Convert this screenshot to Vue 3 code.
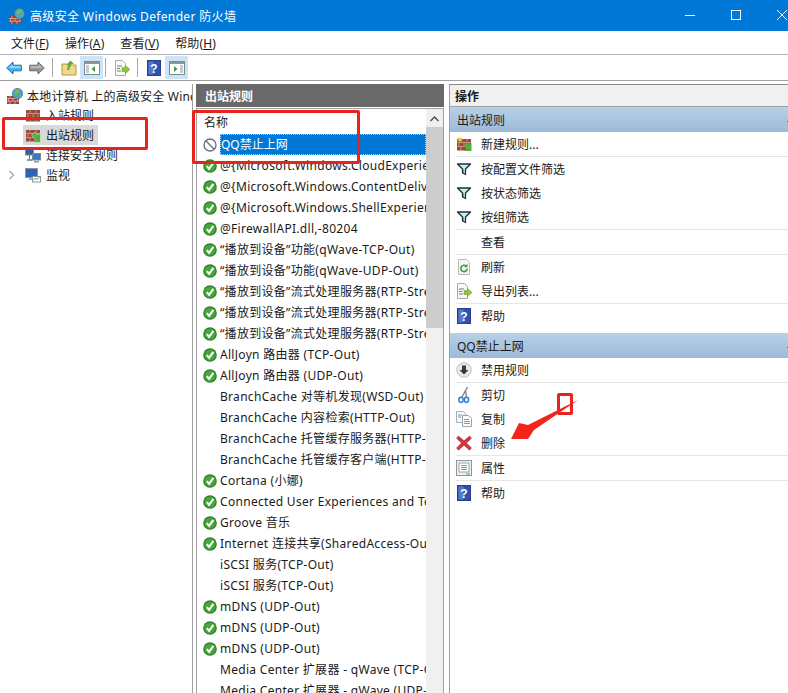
<script setup>
const menus = [
  { label: '文件', key: 'F' },
  { label: '操作', key: 'A' },
  { label: '查看', key: 'V' },
  { label: '帮助', key: 'H' },
]

const treeItems = [
  { label: '入站规则', icon: 'fw-in' },
  { label: '出站规则', icon: 'fw-out', active: true },
  { label: '连接安全规则', icon: 'link' },
  { label: '监视', icon: 'monitor', arrow: true },
]

const rules = [
  { name: 'QQ禁止上网', icon: 'block', selected: true },
  { name: '@{Microsoft.Windows.CloudExperienceHost', icon: 'check' },
  { name: '@{Microsoft.Windows.ContentDeliveryManager', icon: 'check' },
  { name: '@{Microsoft.Windows.ShellExperienceHost', icon: 'check' },
  { name: '@FirewallAPI.dll,-80204', icon: 'check' },
  { name: '“播放到设备”功能(qWave-TCP-Out)', icon: 'check' },
  { name: '“播放到设备”功能(qWave-UDP-Out)', icon: 'check' },
  { name: '“播放到设备”流式处理服务器(RTP-Streaming', icon: 'check' },
  { name: '“播放到设备”流式处理服务器(RTP-Streaming', icon: 'check' },
  { name: '“播放到设备”流式处理服务器(RTP-Streaming', icon: 'check' },
  { name: 'AllJoyn 路由器 (TCP-Out)', icon: 'check' },
  { name: 'AllJoyn 路由器 (UDP-Out)', icon: 'check' },
  { name: 'BranchCache 对等机发现(WSD-Out)' },
  { name: 'BranchCache 内容检索(HTTP-Out)' },
  { name: 'BranchCache 托管缓存服务器(HTTP-Out)' },
  { name: 'BranchCache 托管缓存客户端(HTTP-Out)' },
  { name: 'Cortana (小娜)', icon: 'check' },
  { name: 'Connected User Experiences and Telemetry', icon: 'check' },
  { name: 'Groove 音乐', icon: 'check' },
  { name: 'Internet 连接共享(SharedAccess-Out)', icon: 'check' },
  { name: 'iSCSI 服务(TCP-Out)' },
  { name: 'iSCSI 服务(TCP-Out)' },
  { name: 'mDNS (UDP-Out)', icon: 'check' },
  { name: 'mDNS (UDP-Out)', icon: 'check' },
  { name: 'mDNS (UDP-Out)', icon: 'check' },
  { name: 'Media Center 扩展器 - qWave (TCP-Out)' },
  { name: 'Media Center 扩展器 - qWave (UDP-Out)' },
]

const actionGroups = [
  {
    title: '出站规则',
    items: [
      { label: '新建规则...', icon: 'fw-new', line: true },
      { label: '按配置文件筛选', icon: 'funnel' },
      { label: '按状态筛选', icon: 'funnel' },
      { label: '按组筛选', icon: 'funnel', line: true },
      { label: '查看', line: true },
      { label: '刷新', icon: 'refresh' },
      { label: '导出列表...', icon: 'export', line: true },
      { label: '帮助', icon: 'help' },
    ],
  },
  {
    title: 'QQ禁止上网',
    items: [
      { label: '禁用规则', icon: 'disable', line: true },
      { label: '剪切', icon: 'cut' },
      { label: '复制', icon: 'copy' },
      { label: '删除', icon: 'delete', line: true },
      { label: '属性', icon: 'props', line: true },
      { label: '帮助', icon: 'help' },
    ],
  },
]
</script>

<template>
  <div class="window">
    <svg class="defs" width="0" height="0">
      <defs>
        <g id="bricks">
          <rect x="1" y="3" width="14" height="11.500" fill="#9c463c" />
          <path d="M1 6.500h14M1 10.500h14M5 3v3.500M11 3v3.500M3 6.500v4M8 6.500v4M13 6.500v4M5 10.500v4M11 10.500v4" stroke="#c9a48c" stroke-width=".8" fill="none" />
        </g>
        <symbol id="fw" viewBox="0 0 16 16">
          <path d="M0 8h12v8H0z" fill="#a03f38" />
          <path d="M0 10.500h12M0 13.200h12M3 8v2.500M8 8v2.500M1.500 10.500v2.700M6 10.500v2.700M10.500 10.500v2.700M3 13.200V16M8 13.200V16" stroke="#d9b9a0" stroke-width=".8" fill="none" />
          <circle cx="10.500" cy="5.500" r="5.200" fill="#4f9fc8" stroke="#2b6a8c" stroke-width=".6" />
          <path d="M7.500 3.500l3-2.200 2.500 1-1.200 2.700-2 .4-.3 2-1.500-1.500z" fill="#79b958" />
          <path d="M12 7.500l1.800-.8.300 1.600-1.300 1z" fill="#79b958" />
        </symbol>
        <symbol id="fw-in" viewBox="0 0 16 16">
          <use href="#bricks" />
          <path d="M15 10H10V7.500L6 11l4 3.500V12h5z" fill="#55a93c" />
        </symbol>
        <symbol id="fw-out" viewBox="0 0 16 16">
          <use href="#bricks" />
          <path d="M6.500 8l3-3 3 3L15.500 6v9.500H8l2.500-2.500z" fill="#4fb03c" stroke="#e8f5e0" stroke-width=".5" />
        </symbol>
        <symbol id="fw-new" viewBox="0 0 16 16">
          <use href="#bricks" />
          <path d="M8 9l2.500-2.500 2.500 2.500L15.500 7v8H8.500l2-2z" fill="#4fb03c" />
          <path d="M3.500 0l.8 2 2-.6-1 1.800L6.800 4.500l-2 .2L4 6.500 3 4.700l-2-.2 1.500-1.300-1-1.800 2 .6z" fill="#f2c83c" />
        </symbol>
        <symbol id="link" viewBox="0 0 16 16">
          <rect x=".5" y="1.500" width="8" height="6.500" fill="#2d5ea8" stroke="#7c8798" />
          <rect x="7.500" y="6.500" width="8" height="6.500" fill="#3d78c4" stroke="#7c8798" />
          <path d="M2 12h5v2H2zM9 14h5v1.500H9z" fill="#8d98a6" />
          <path d="M4.500 8v4" stroke="#5d8c3c" />
        </symbol>
        <symbol id="monitor" viewBox="0 0 16 16">
          <rect x=".5" y="1.500" width="12" height="9" fill="#2f62b4" stroke="#8a96a6" />
          <path d="M4 10.500h5V13H4z" fill="#a5aebb" />
          <rect x="7.500" y="9.500" width="8" height="5.500" fill="#fff" stroke="#8a96a6" />
          <path d="M8.500 13l2-2 1.500 1.500 2.500-2.500" stroke="#4aa33a" fill="none" />
        </symbol>
        <symbol id="check" viewBox="0 0 14 14">
          <circle cx="7" cy="7" r="6.800" fill="#2f7d2a" />
          <circle cx="7" cy="7" r="5.600" fill="#46a63a" />
          <path d="M3.800 7.200l2.300 2.700 4.300-6" stroke="#fff" stroke-width="2" fill="none" />
        </symbol>
        <symbol id="block" viewBox="0 0 14 14">
          <circle cx="7" cy="7" r="6" fill="#fff" stroke="#6f6a86" stroke-width="1.300" />
          <path d="M2.800 2.800l8.400 8.400" stroke="#6f6a86" stroke-width="1.300" />
        </symbol>
        <symbol id="funnel" viewBox="0 0 16 16">
          <path d="M1.500 3h13l-5 5v5.500l-3-1.500V8z" fill="#cfe8e8" stroke="#17383c" stroke-width="1.300" stroke-linejoin="round" />
          <path d="M7.500 8.500v3.500" stroke="#5f9da0" />
        </symbol>
        <symbol id="refresh" viewBox="0 0 16 16">
          <path d="M2.500.5h8l3 3v12h-11z" fill="#f5f7f3" stroke="#b4bcb0" />
          <path d="M11.200 9.500a3.200 3.200 0 1 1-1-2.400" stroke="#3f9c45" stroke-width="1.600" fill="none" />
          <path d="M11.500 4.800v3.400H8.200z" fill="#3f9c45" />
        </symbol>
        <symbol id="export" viewBox="0 0 16 16">
          <path d="M1.500.5h7l3 3v12h-10z" fill="#fafaf5" stroke="#a8aca0" />
          <path d="M3 6h5M3 8.500h3M3 11h4" stroke="#6f7a70" />
          <path d="M8 7.500h3.500V5.500L16 9.500l-4.500 4v-2H8z" fill="#8bc838" stroke="#5c9a2a" stroke-width=".5" />
        </symbol>
        <symbol id="help" viewBox="0 0 14 16">
          <rect x=".5" y=".5" width="13" height="15" fill="#2f52b0" stroke="#24408c" />
          <rect x="1.500" y="1.500" width="5" height="13" fill="#5578cc" />
          <text x="7" y="12.500" font-size="12" font-weight="700" fill="#fff" text-anchor="middle" font-family="Liberation Sans, sans-serif">?</text>
        </symbol>
        <symbol id="disable" viewBox="0 0 16 16">
          <circle cx="8" cy="8" r="7.300" fill="#e8e8e8" stroke="#c2c2c2" />
          <path d="M6 3.500h4V8h2.500L8 12.500 3.500 8H6z" fill="#3a3a3a" />
        </symbol>
        <symbol id="cut" viewBox="0 0 16 16">
          <path d="M11.500 0L6 10M9.500 3L10.500 10" stroke="#74818f" stroke-width="1.300" fill="none" />
          <ellipse cx="5" cy="12.800" rx="2.200" ry="2.600" fill="none" stroke="#2a7fd0" stroke-width="1.500" />
          <ellipse cx="10.500" cy="12.800" rx="2.200" ry="2.600" fill="none" stroke="#2a7fd0" stroke-width="1.500" />
        </symbol>
        <symbol id="copy" viewBox="0 0 16 16">
          <path d="M.5.500h7l2 2v9h-9z" fill="#f6f8fa" stroke="#a8b0b8" />
          <path d="M6.500 4.500h6l3 3v8h-9z" fill="#fff" stroke="#98a2ac" />
          <path d="M8 8.500h5M8 10.500h6M8 12.500h6M2 4h4M2 6h3" stroke="#8a96a2" />
        </symbol>
        <symbol id="delete" viewBox="0 0 16 16">
          <path d="M2.500 1L8 5.800 13.500 1 15.500 3.200 10.500 8l5 5-2 2.200L8 10.200 2.500 15.200.5 13l5-5-5-4.800z" fill="#d2363c" stroke="#a82a30" stroke-width=".5" />
        </symbol>
        <symbol id="props" viewBox="0 0 16 16">
          <rect x=".5" y=".5" width="15" height="15" fill="#eef0f0" stroke="#8e9696" />
          <rect x="3" y="3" width="10" height="9" fill="#fff" stroke="#9aa4a4" />
          <path d="M5 5.500h6M5 7.500h6M5 9.500h6" stroke="#8a9494" />
          <path d="M10 14h4" stroke="#3fa7a7" />
        </symbol>
        <symbol id="back" viewBox="0 0 16 14">
          <path d="M.7 7L7 1v3.200h8.300v5.600H7V13z" fill="#4fb0ec" stroke="#1f6fb0" />
          <path d="M2.500 7L6.500 3.500v1.700h8V7z" fill="#9ad6f8" />
        </symbol>
        <symbol id="forward" viewBox="0 0 16 14">
          <path d="M15.300 7L9 1v3.200H.7v5.600H9V13z" fill="#979797" stroke="#6a6a6a" />
          <path d="M1.500 5.200h8V3.500L13.500 7h-12z" fill="#bdbdbd" />
        </symbol>
        <symbol id="folder-up" viewBox="0 0 16 16">
          <path d="M1 4h5l1 1h8v10H1z" fill="#efd98c" stroke="#ae9645" />
          <path d="M6 10l1-5H5L9.500 .5 13 4h-2.500L8 10z" fill="#6aa83c" />
        </symbol>
        <symbol id="pane-left" viewBox="0 0 16 16">
          <rect x=".5" y="1.500" width="15" height="13" fill="#fff" stroke="#7d8a90" />
          <path d="M1 2h14v2H1z" fill="#8a9a94" />
          <path d="M2 6h3M2 8h3M2 10h3M2 12h3" stroke="#8a969c" />
          <path d="M11 6v6L7.500 9z" fill="#3f9c45" />
        </symbol>
        <symbol id="pane-right" viewBox="0 0 16 16">
          <rect x=".5" y="1.500" width="15" height="13" fill="#fff" stroke="#7d8a90" />
          <path d="M1 2h14v2H1z" fill="#8a9a94" />
          <path d="M11 6h3M11 8h3M11 10h3M11 12h3" stroke="#8a969c" />
          <path d="M5 6v6L8.500 9z" fill="#3f9c45" />
        </symbol>
      </defs>
    </svg>

    <header class="titlebar">
      <svg class="title-icon"><use href="#fw" /></svg>
      <span class="title-text">高级安全 Windows Defender 防火墙</span>
      <div class="win-btns">
        <svg width="46" height="31" viewBox="0 0 46 31"><path d="M18 15.500h10" stroke="#fff" /></svg>
        <svg width="46" height="31" viewBox="0 0 46 31"><rect x="18.500" y="10.500" width="9" height="9" fill="none" stroke="#fff" /></svg>
        <svg width="46" height="31" viewBox="0 0 46 31"><path d="M18 10l10 10M28 10L18 20" stroke="#fff" /></svg>
      </div>
    </header>

    <nav class="menubar">
      <span v-for="m in menus" :key="m.key" class="menu-item">{{ m.label }}(<u>{{ m.key }}</u>)</span>
    </nav>

    <div class="toolbar">
      <svg class="tool mr7"><use href="#back" /></svg>
      <svg class="tool mr7"><use href="#forward" /></svg>
      <i class="tool-sep"></i>
      <svg class="tool mr3"><use href="#folder-up" /></svg>
      <span class="tool-on mr2"><svg class="tool"><use href="#pane-left" /></svg></span>
      <i class="tool-sep"></i>
      <svg class="tool mr7"><use href="#export" /></svg>
      <i class="tool-sep"></i>
      <svg class="tool mr3"><use href="#help" /></svg>
      <span class="tool-on"><svg class="tool"><use href="#pane-right" /></svg></span>
    </div>

    <main class="panes">
      <section class="tree">
        <div class="tree-root">
          <svg class="ico"><use href="#fw" /></svg>
          <span class="tree-root-label">本地计算机 上的高级安全 Windows Defender 防火墙</span>
        </div>
        <div v-for="t in treeItems" :key="t.label" class="tree-row">
          <span class="tree-arrow">
            <svg v-if="t.arrow" width="8" height="10" viewBox="0 0 8 10"><path d="M1.500 1l4 4-4 4" fill="none" stroke="#a6a6a6" stroke-width="1.300" /></svg>
          </span>
          <span class="tree-item" :class="{ active: t.active }">
            <svg class="ico"><use :href="'#' + t.icon" /></svg>
            <span class="tree-label">{{ t.label }}</span>
          </span>
        </div>
      </section>

      <section class="center">
        <div class="center-head">出站规则</div>
        <div class="list-box">
          <div class="list">
            <div class="list-head">名称</div>
            <div v-for="(r, i) in rules" :key="i" class="rule">
              <span class="rule-ico"><svg v-if="r.icon" class="ico-sm"><use :href="'#' + r.icon" /></svg></span>
              <span class="rule-name" :class="{ selected: r.selected }">{{ r.name }}</span>
            </div>
          </div>
          <div class="scrollbar">
            <svg class="scroll-up" width="17" height="19" viewBox="0 0 17 19"><path d="M4.500 12l4-4 4 4" fill="none" stroke="#505050" stroke-width="1.500" /></svg>
            <div class="scroll-thumb"></div>
          </div>
        </div>
      </section>

      <section class="actions">
        <div class="actions-head">操作</div>
        <div v-for="g in actionGroups" :key="g.title" class="group">
          <div class="group-head">
            <span>{{ g.title }}</span>
            <svg class="group-caret" width="10" height="8" viewBox="0 0 10 8"><path d="M5 1L1 6h8z" fill="#222" /></svg>
          </div>
          <div v-for="a in g.items" :key="a.label" class="action" :class="{ line: a.line }">
            <span class="action-ico"><svg v-if="a.icon" class="ico"><use :href="'#' + a.icon" /></svg></span>
            <span>{{ a.label }}</span>
          </div>
        </div>
      </section>
    </main>

    <!-- red marks drawn over the screenshot -->
    <div class="mark mark-tree"></div>
    <div class="mark mark-rule"></div>
    <div class="mark mark-small"></div>
    <svg class="mark-arrow" width="80" height="56" viewBox="0 0 80 56">
      <path d="M68 2L24 32 18 41H1L9 25 18 27z" fill="#f3241a" />
    </svg>
  </div>
</template>

<style scoped>
.window {
  position: relative;
  width: 788px;
  height: 693px;
  overflow: hidden;
  background: #fff;
  color: #1a1a1a;
  font-family: "Noto Sans", "Noto Sans CJK SC", sans-serif;
  font-size: 12px;
}

.defs {
  position: absolute;
}

.titlebar {
  display: flex;
  align-items: center;
  height: 31px;
  padding-left: 9px;
  background: #0078d7;
  color: #fff;
}

.title-icon {
  width: 16px;
  height: 16px;
  margin-right: 5px;
}

.title-text {
  font-size: 12px;
  letter-spacing: 0.35px;
}

.win-btns {
  display: flex;
  margin-left: auto;
  margin-right: -17px;
}

.menubar {
  display: flex;
  align-items: center;
  gap: 16px;
  height: 23px;
  padding-left: 11px;
  border-bottom: 1px solid #b4b4b4;
  letter-spacing: 0.1px;
}

.toolbar {
  display: flex;
  align-items: center;
  height: 25px;
  padding-left: 6px;
  border-bottom: 1px solid #a0a0a0;
}

.tool {
  display: block;
  width: 16px;
  height: 16px;
}

.mr2 {
  margin-right: 2px;
}

.mr3 {
  margin-right: 3px;
}

.mr7 {
  margin-right: 7px;
}

.tool-sep {
  width: 1px;
  height: 19px;
  margin-right: 8px;
  background: #a8a8a8;
}

.tool-on {
  display: flex;
  align-items: center;
  justify-content: center;
  width: 23px;
  height: 23px;
  background: #cce4f7;
}

.panes {
  display: flex;
  height: 612px;
  padding-top: 3px;
  box-sizing: border-box;
}

.tree {
  width: 193px;
  flex: none;
  overflow: hidden;
  padding-top: 2px;
  border-right: 1px solid #a0a0a0;
  box-sizing: border-box;
}

.tree-root {
  display: flex;
  align-items: center;
  height: 19px;
  padding-left: 7px;
  white-space: nowrap;
  letter-spacing: 0.2px;
}

.tree-root-label {
  margin-left: 4px;
}

.tree-row {
  display: flex;
  align-items: center;
  height: 20px;
  white-space: nowrap;
}

.tree-arrow {
  display: flex;
  justify-content: center;
  width: 23px;
}

.tree-item {
  display: flex;
  align-items: center;
  height: 20px;
  padding: 0 4px 0 2px;
}

.tree-item.active {
  background: #d9d9d9;
}

.ico {
  display: block;
  width: 16px;
  height: 16px;
  flex: none;
}

.ico-sm {
  display: block;
  width: 14px;
  height: 14px;
}

.tree-label {
  margin-left: 5px;
}

.center {
  width: 248px;
  flex: none;
  margin-left: 3px;
  overflow: hidden;
}

.center-head {
  display: flex;
  align-items: center;
  height: 23px;
  padding-left: 9px;
  background: #696969;
  color: #fff;
  font-weight: 600;
}

.list-box {
  display: flex;
  height: 600px;
  margin-top: 1px;
  border: 1px solid #a0a0a0;
  box-sizing: border-box;
}

.list {
  flex: 1;
  min-width: 0;
  overflow: hidden;
}

.list-head {
  display: flex;
  align-items: center;
  height: 25px;
  padding-left: 7px;
}

.rule {
  display: flex;
  align-items: center;
  height: 21px;
}

.rule-ico {
  width: 23px;
  padding-left: 6px;
  box-sizing: border-box;
  flex: none;
}

.rule-name {
  line-height: 21px;
  white-space: nowrap;
  overflow: hidden;
  letter-spacing: 0.3px;
}

.rule-name.selected {
  flex: 1;
  background: #0078d7;
  color: #fff;
  line-height: 19px;
  border: 1px dotted #a8d0f0;
  letter-spacing: 0;
}

.scrollbar {
  position: relative;
  width: 17px;
  flex: none;
  background: #f0f0f0;
}

.scroll-thumb {
  height: 201px;
  margin-top: 18px;
  background: #cdcdcd;
}

.scroll-up {
  position: absolute;
  top: 0;
  left: 0;
}

.actions {
  flex: 1;
  margin-left: 5px;
  border-left: 1px solid #a0a0a0;
  border-top: 1px solid #8a8a8a;
}

.actions-head {
  display: flex;
  align-items: center;
  height: 21px;
  padding-left: 5px;
  background: #f0f0f0;
  border-bottom: 1px solid #a0a0a0;
  font-weight: 600;
}

.group {
  margin-bottom: 5px;
}

.group-head {
  display: flex;
  align-items: center;
  justify-content: space-between;
  height: 25px;
  padding-left: 7px;
  background: linear-gradient(#b8d0e8, #9cbad8);
}

.group-caret {
  margin-right: -8px;
}

.action {
  display: flex;
  align-items: center;
  height: 24.500px;
  margin-left: 6px;
  box-sizing: border-box;
}

.action.line {
  border-bottom: 1px solid #e6e6e6;
}

.action-ico {
  width: 25px;
  flex: none;
}

.mark {
  position: absolute;
  border: 3px solid #e8231c;
  border-radius: 2px;
  box-sizing: border-box;
}

.mark-tree {
  left: 2px;
  top: 117px;
  width: 146px;
  height: 33px;
}

.mark-rule {
  left: 192px;
  top: 110px;
  width: 168px;
  height: 54px;
}

.mark-small {
  left: 557px;
  top: 393px;
  width: 16px;
  height: 22px;
}

.mark-arrow {
  position: absolute;
  left: 510px;
  top: 398px;
}
</style>
